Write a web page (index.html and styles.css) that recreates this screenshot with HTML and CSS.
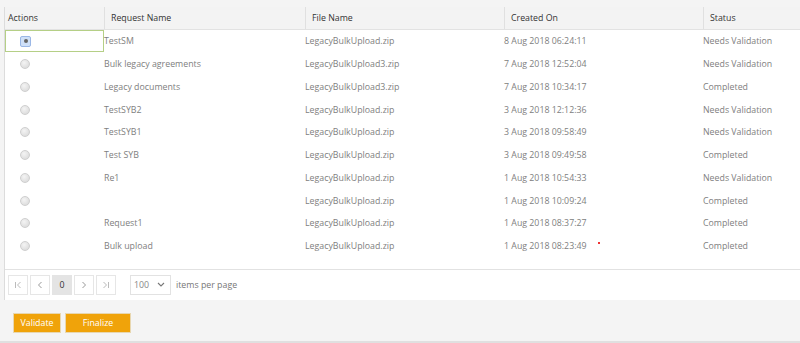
FILE: index.html
```html
<!DOCTYPE html>
<html>
<head>
<meta charset="utf-8">
<link rel="stylesheet" href="styles.css">
</head>
<body>
<div class="page">
  <div class="grid">
    <div class="row head">
      <div class="c c1">Actions</div>
      <div class="c c2">Request Name</div>
      <div class="c c3">File Name</div>
      <div class="c c4">Created On</div>
      <div class="c c5">Status</div>
    </div>
    <div class="body">
      <div class="row sel"><div class="c c1"><span class="radio on"></span></div><div class="c c2">TestSM</div><div class="c c3">LegacyBulkUpload.zip</div><div class="c c4">8 Aug 2018 06:24:11</div><div class="c c5">Needs Validation</div></div>
      <div class="row"><div class="c c1"><span class="radio"></span></div><div class="c c2">Bulk legacy agreements</div><div class="c c3">LegacyBulkUpload3.zip</div><div class="c c4">7 Aug 2018 12:52:04</div><div class="c c5">Needs Validation</div></div>
      <div class="row"><div class="c c1"><span class="radio"></span></div><div class="c c2">Legacy documents</div><div class="c c3">LegacyBulkUpload3.zip</div><div class="c c4">7 Aug 2018 10:34:17</div><div class="c c5">Completed</div></div>
      <div class="row"><div class="c c1"><span class="radio"></span></div><div class="c c2">TestSYB2</div><div class="c c3">LegacyBulkUpload.zip</div><div class="c c4">3 Aug 2018 12:12:36</div><div class="c c5">Needs Validation</div></div>
      <div class="row"><div class="c c1"><span class="radio"></span></div><div class="c c2">TestSYB1</div><div class="c c3">LegacyBulkUpload.zip</div><div class="c c4">3 Aug 2018 09:58:49</div><div class="c c5">Needs Validation</div></div>
      <div class="row"><div class="c c1"><span class="radio"></span></div><div class="c c2">Test SYB</div><div class="c c3">LegacyBulkUpload.zip</div><div class="c c4">3 Aug 2018 09:49:58</div><div class="c c5">Completed</div></div>
      <div class="row"><div class="c c1"><span class="radio"></span></div><div class="c c2">Re1</div><div class="c c3">LegacyBulkUpload.zip</div><div class="c c4">1 Aug 2018 10:54:33</div><div class="c c5">Needs Validation</div></div>
      <div class="row"><div class="c c1"><span class="radio"></span></div><div class="c c2"></div><div class="c c3">LegacyBulkUpload.zip</div><div class="c c4">1 Aug 2018 10:09:24</div><div class="c c5">Completed</div></div>
      <div class="row"><div class="c c1"><span class="radio"></span></div><div class="c c2">Request1</div><div class="c c3">LegacyBulkUpload.zip</div><div class="c c4">1 Aug 2018 08:37:27</div><div class="c c5">Completed</div></div>
      <div class="row"><div class="c c1"><span class="radio"></span></div><div class="c c2">Bulk upload</div><div class="c c3">LegacyBulkUpload.zip</div><div class="c c4">1 Aug 2018 08:23:49<span class="dot"></span></div><div class="c c5">Completed</div></div>
    </div>
    <div class="pager">
      <span class="pb">
        <svg width="10" height="10" viewBox="0 0 10 10"><path d="M2.5 2v6M7.5 2L4.5 5l3 3" fill="none" stroke="#bbb" stroke-width="1"/></svg>
      </span>
      <span class="pb">
        <svg width="10" height="10" viewBox="0 0 10 10"><path d="M6.5 2L3.5 5l3 3" fill="none" stroke="#999" stroke-width="1"/></svg>
      </span>
      <span class="pb cur">0</span>
      <span class="pb">
        <svg width="10" height="10" viewBox="0 0 10 10"><path d="M3.5 2l3 3-3 3" fill="none" stroke="#999" stroke-width="1"/></svg>
      </span>
      <span class="pb">
        <svg width="10" height="10" viewBox="0 0 10 10"><path d="M2.5 2l3 3-3 3M7.5 2v6" fill="none" stroke="#bbb" stroke-width="1"/></svg>
      </span>
      <span class="size">100
        <svg width="8" height="5" viewBox="0 0 8 5"><path d="M1 1l3 3 3-3" fill="none" stroke="#777" stroke-width="1.1"/></svg>
      </span>
      <span class="ipp">items per page</span>
    </div>
  </div>
  <div class="actions">
    <button class="btn">Validate</button>
    <button class="btn wide">Finalize</button>
  </div>
</div>
</body>
</html>
```
FILE: styles.css
```css
* { box-sizing: border-box; }
html, body { margin: 0; padding: 0; }
body {
  background: #f4f4f4;
  font-family: "Open Sans", "Noto Sans", sans-serif;
  font-size: 8.8px;
  color: #808080;
  width: 800px;
  height: 343px;
  overflow: hidden;
}
.page {
  padding-top: 7px;
  height: 343px;
  border-bottom: 2px solid #e0e0e0;
}
.grid {
  margin-left: 4px;
  background: #fff;
  border-left: 1px solid #dcdcdc;
}
.row {
  display: flex;
  height: 22.75px;
  align-items: center;
}
.head {
  height: 23px;
  background: #f3f3f3;
  color: #333;
  border-bottom: 1px solid #e2e2e2;
}
.head .c { height: 100%; display: flex; align-items: center; border-left: 1px solid #e0e0e0; }
.head .c1 { border-left: none; padding-left: 3px; }
.c { flex: none; white-space: nowrap; }
.c1 { width: 99px; }
.c2 { width: 201px; }
.c3 { width: 199px; }
.c4 { width: 199px; position: relative; }
.c5 { flex: 1; }
.head .c2, .head .c3, .head .c4, .head .c5 { padding-left: 6px; }
.body { padding-bottom: 11px; border-bottom: 1px solid #e2e2e2; }
.body .c1 { display: flex; justify-content: flex-start; padding-left: 15px; height: 100%; align-items: center; }
.sel .c1 { border: 1px solid #b5cf86; height: 22px; padding-left: 14px; }
.radio {
  width: 10px; height: 10px; border-radius: 50%;
  background: radial-gradient(circle at 40% 35%, #f4f4f4, #d6d6d6);
  border: 1px solid #cfcfcf;
  display: inline-block;
}
.radio.on {
  border-radius: 2px;
  background: #cfe0f8;
  border: 1px solid #9ab7e6;
  width: 11px; height: 11px;
  position: relative;
}
.radio.on::after {
  content: ""; position: absolute; left: 2.5px; top: 2.5px;
  width: 4px; height: 4px; border-radius: 50%; background: #666;
}
.dot { position: absolute; left: 94px; top: 2px; width: 2px; height: 2px; background: #e33; }
.pager {
  height: 30px;
  display: flex;
  align-items: center;
  padding-left: 3px;
  gap: 2px;
}
.pb {
  width: 20px; height: 20px;
  border: 1px solid #e6e6e6;
  display: inline-flex; align-items: center; justify-content: center;
  color: #333;
  background: #fff;
}
.pb.cur { background: #e4e4e4; border-color: #e4e4e4; }
.size {
  margin-left: 12px;
  width: 41px; height: 20px;
  border: 1px solid #e2e2e2;
  display: inline-flex; align-items: center; justify-content: space-between;
  padding: 0 5px 0 3px;
  color: #888;
}
.ipp { margin-left: 3px; color: #777; }
.actions {
  padding: 13px 0 0 13px;
  display: flex;
  gap: 4px;
}
.btn {
  font-family: inherit;
  font-size: 8.8px;
  color: #fff;
  background: #f0a30a;
  border: 1px solid #e8d7b0;
  height: 20px;
  width: 48px;
  padding: 0;
}
.btn.wide { width: 66px; }
```
